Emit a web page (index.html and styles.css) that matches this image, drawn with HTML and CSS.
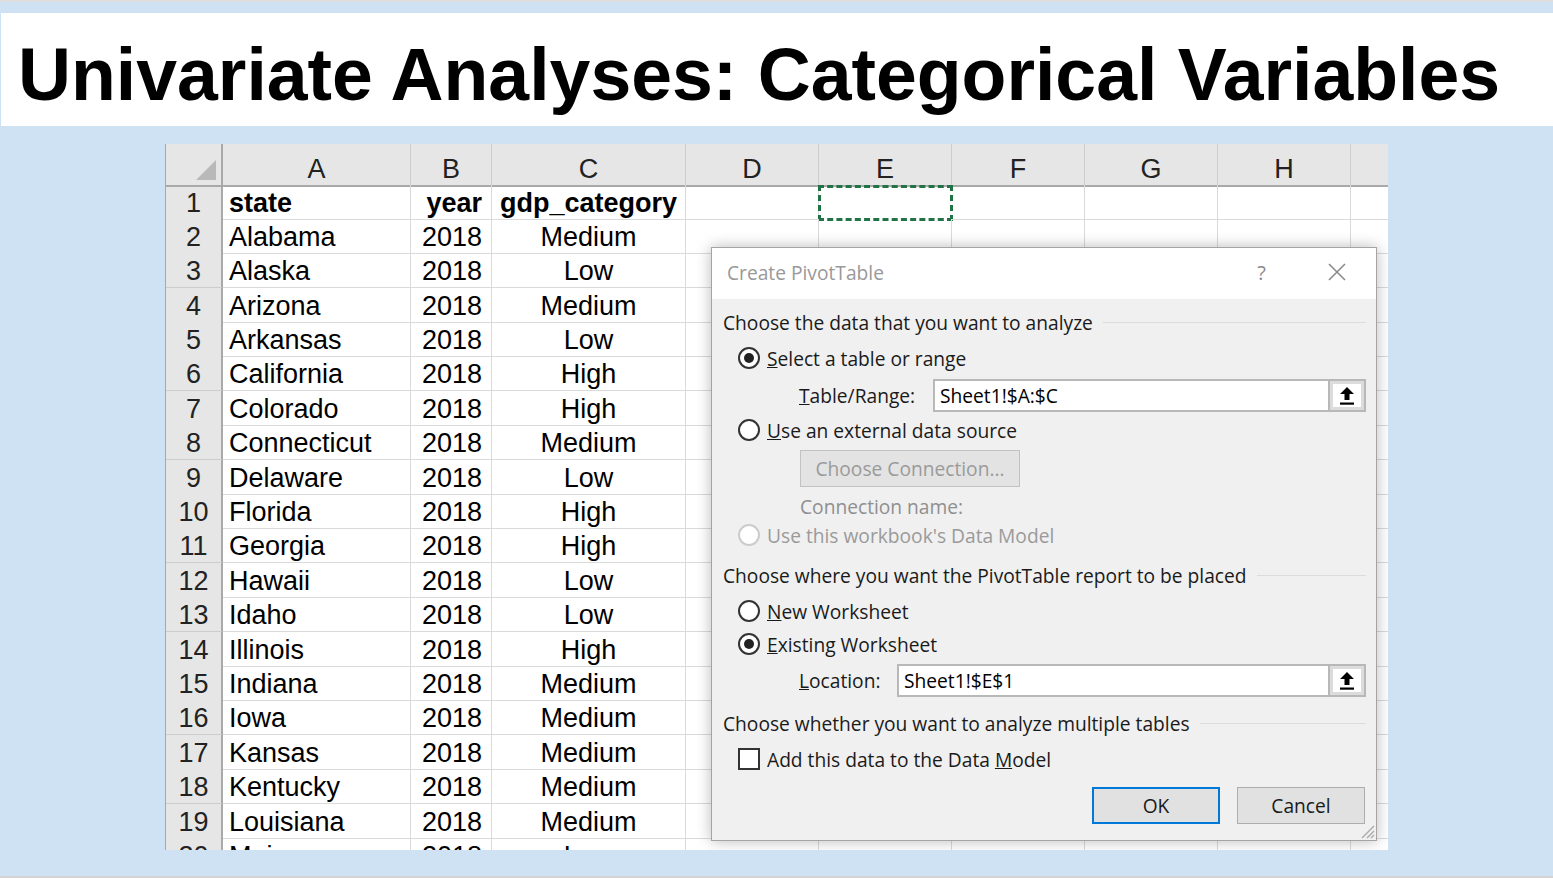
FILE: index.html
```html
<!DOCTYPE html>
<html lang="en">
<head>
<meta charset="utf-8">
<title>Univariate Analyses: Categorical Variables</title>
<link rel="stylesheet" href="styles.css">
</head>
<body>
<div class="page">
  <header class="title-bar">
    <h1>Univariate Analyses: Categorical Variables</h1>
  </header>

  <section class="sheet">
    <div class="row head-row">
      <div class="cell corner"><span class="corner-tri"></span></div>
      <div class="cell col-head">A</div>
      <div class="cell col-head">B</div>
      <div class="cell col-head">C</div>
      <div class="cell col-head">D</div>
      <div class="cell col-head">E</div>
      <div class="cell col-head">F</div>
      <div class="cell col-head">G</div>
      <div class="cell col-head">H</div>
      <div class="cell col-head"></div>
    </div>
    <div class="row">
      <div class="cell row-head">1</div>
      <div class="cell c-left bold">state</div>
      <div class="cell c-right bold">year</div>
      <div class="cell c-center bold">gdp_category</div>
      <div class="cell"></div><div class="cell selected"></div><div class="cell"></div><div class="cell"></div><div class="cell"></div><div class="cell"></div>
    </div>
    <div class="row"><div class="cell row-head">2</div><div class="cell c-left">Alabama</div><div class="cell c-right">2018</div><div class="cell c-center">Medium</div><div class="cell"></div><div class="cell"></div><div class="cell"></div><div class="cell"></div><div class="cell"></div><div class="cell"></div></div>
    <div class="row"><div class="cell row-head">3</div><div class="cell c-left">Alaska</div><div class="cell c-right">2018</div><div class="cell c-center">Low</div><div class="cell"></div><div class="cell"></div><div class="cell"></div><div class="cell"></div><div class="cell"></div><div class="cell"></div></div>
    <div class="row"><div class="cell row-head">4</div><div class="cell c-left">Arizona</div><div class="cell c-right">2018</div><div class="cell c-center">Medium</div><div class="cell"></div><div class="cell"></div><div class="cell"></div><div class="cell"></div><div class="cell"></div><div class="cell"></div></div>
    <div class="row"><div class="cell row-head">5</div><div class="cell c-left">Arkansas</div><div class="cell c-right">2018</div><div class="cell c-center">Low</div><div class="cell"></div><div class="cell"></div><div class="cell"></div><div class="cell"></div><div class="cell"></div><div class="cell"></div></div>
    <div class="row"><div class="cell row-head">6</div><div class="cell c-left">California</div><div class="cell c-right">2018</div><div class="cell c-center">High</div><div class="cell"></div><div class="cell"></div><div class="cell"></div><div class="cell"></div><div class="cell"></div><div class="cell"></div></div>
    <div class="row"><div class="cell row-head">7</div><div class="cell c-left">Colorado</div><div class="cell c-right">2018</div><div class="cell c-center">High</div><div class="cell"></div><div class="cell"></div><div class="cell"></div><div class="cell"></div><div class="cell"></div><div class="cell"></div></div>
    <div class="row"><div class="cell row-head">8</div><div class="cell c-left">Connecticut</div><div class="cell c-right">2018</div><div class="cell c-center">Medium</div><div class="cell"></div><div class="cell"></div><div class="cell"></div><div class="cell"></div><div class="cell"></div><div class="cell"></div></div>
    <div class="row"><div class="cell row-head">9</div><div class="cell c-left">Delaware</div><div class="cell c-right">2018</div><div class="cell c-center">Low</div><div class="cell"></div><div class="cell"></div><div class="cell"></div><div class="cell"></div><div class="cell"></div><div class="cell"></div></div>
    <div class="row"><div class="cell row-head">10</div><div class="cell c-left">Florida</div><div class="cell c-right">2018</div><div class="cell c-center">High</div><div class="cell"></div><div class="cell"></div><div class="cell"></div><div class="cell"></div><div class="cell"></div><div class="cell"></div></div>
    <div class="row"><div class="cell row-head">11</div><div class="cell c-left">Georgia</div><div class="cell c-right">2018</div><div class="cell c-center">High</div><div class="cell"></div><div class="cell"></div><div class="cell"></div><div class="cell"></div><div class="cell"></div><div class="cell"></div></div>
    <div class="row"><div class="cell row-head">12</div><div class="cell c-left">Hawaii</div><div class="cell c-right">2018</div><div class="cell c-center">Low</div><div class="cell"></div><div class="cell"></div><div class="cell"></div><div class="cell"></div><div class="cell"></div><div class="cell"></div></div>
    <div class="row"><div class="cell row-head">13</div><div class="cell c-left">Idaho</div><div class="cell c-right">2018</div><div class="cell c-center">Low</div><div class="cell"></div><div class="cell"></div><div class="cell"></div><div class="cell"></div><div class="cell"></div><div class="cell"></div></div>
    <div class="row"><div class="cell row-head">14</div><div class="cell c-left">Illinois</div><div class="cell c-right">2018</div><div class="cell c-center">High</div><div class="cell"></div><div class="cell"></div><div class="cell"></div><div class="cell"></div><div class="cell"></div><div class="cell"></div></div>
    <div class="row"><div class="cell row-head">15</div><div class="cell c-left">Indiana</div><div class="cell c-right">2018</div><div class="cell c-center">Medium</div><div class="cell"></div><div class="cell"></div><div class="cell"></div><div class="cell"></div><div class="cell"></div><div class="cell"></div></div>
    <div class="row"><div class="cell row-head">16</div><div class="cell c-left">Iowa</div><div class="cell c-right">2018</div><div class="cell c-center">Medium</div><div class="cell"></div><div class="cell"></div><div class="cell"></div><div class="cell"></div><div class="cell"></div><div class="cell"></div></div>
    <div class="row"><div class="cell row-head">17</div><div class="cell c-left">Kansas</div><div class="cell c-right">2018</div><div class="cell c-center">Medium</div><div class="cell"></div><div class="cell"></div><div class="cell"></div><div class="cell"></div><div class="cell"></div><div class="cell"></div></div>
    <div class="row"><div class="cell row-head">18</div><div class="cell c-left">Kentucky</div><div class="cell c-right">2018</div><div class="cell c-center">Medium</div><div class="cell"></div><div class="cell"></div><div class="cell"></div><div class="cell"></div><div class="cell"></div><div class="cell"></div></div>
    <div class="row"><div class="cell row-head">19</div><div class="cell c-left">Louisiana</div><div class="cell c-right">2018</div><div class="cell c-center">Medium</div><div class="cell"></div><div class="cell"></div><div class="cell"></div><div class="cell"></div><div class="cell"></div><div class="cell"></div></div>
    <div class="row"><div class="cell row-head">20</div><div class="cell c-left">Maine</div><div class="cell c-right">2018</div><div class="cell c-center">Low</div><div class="cell"></div><div class="cell"></div><div class="cell"></div><div class="cell"></div><div class="cell"></div><div class="cell"></div></div>

    <div class="dialog">
      <div class="dlg-title">
        <span class="dlg-name">Create PivotTable</span>
        <span class="dlg-help">?</span>
        <svg class="dlg-close" width="18" height="18" viewBox="0 0 18 18"><path d="M1 1 L17 17 M17 1 L1 17" stroke="#8a8a8a" stroke-width="1.6" fill="none"/></svg>
      </div>
      <div class="dlg-body">
        <div class="group-head"><span>Choose the data that you want to analyze</span></div>
        <div class="opt opt-first"><span class="radio checked"></span><span><u>S</u>elect a table or range</span></div>
        <div class="field field-range">
          <span class="field-label lbl-range"><u>T</u>able/Range:</span>
          <div class="input-wrap">
            <span class="input-text">Sheet1!$A:$C</span>
            <span class="pick"><svg width="16" height="20" viewBox="0 0 16 20"><path d="M8 1 L15 8 L10.5 8 L10.5 14 L5.5 14 L5.5 8 L1 8 Z" fill="#000"/><rect x="1" y="16.5" width="14" height="2.2" fill="#000"/></svg></span>
          </div>
        </div>
        <div class="opt opt-ext"><span class="radio"></span><span><u>U</u>se an external data source</span></div>
        <div class="conn-btn">Choose Connection...</div>
        <div class="conn-name">Connection name:</div>
        <div class="opt opt-model disabled"><span class="radio off"></span><span>Use this workbook's Data Model</span></div>

        <div class="group-head gh-2"><span>Choose where you want the PivotTable report to be placed</span></div>
        <div class="opt opt-first"><span class="radio"></span><span><u>N</u>ew Worksheet</span></div>
        <div class="opt opt-exist"><span class="radio checked"></span><span><u>E</u>xisting Worksheet</span></div>
        <div class="field field-loc">
          <span class="field-label lbl-loc"><u>L</u>ocation:</span>
          <div class="input-wrap">
            <span class="input-text">Sheet1!$E$1</span>
            <span class="pick"><svg width="16" height="20" viewBox="0 0 16 20"><path d="M8 1 L15 8 L10.5 8 L10.5 14 L5.5 14 L5.5 8 L1 8 Z" fill="#000"/><rect x="1" y="16.5" width="14" height="2.2" fill="#000"/></svg></span>
          </div>
        </div>

        <div class="group-head gh-3"><span>Choose whether you want to analyze multiple tables</span></div>
        <div class="opt opt-first"><span class="check"></span><span>Add this data to the Data <u>M</u>odel</span></div>

        <div class="dlg-buttons">
          <div class="btn btn-ok">OK</div>
          <div class="btn">Cancel</div>
        </div>
      </div>
      <svg class="grip" width="16" height="16" viewBox="0 0 16 16"><path d="M15 3 L3 15 M15 8 L8 15 M15 12 L12 15" stroke="#a8a8a8" stroke-width="1.3" fill="none"/></svg>
    </div>
  </section>
</div>
</body>
</html>
```

FILE: styles.css
```css
html, body {
  margin: 0;
  padding: 0;
}

body {
  width: 1553px;
  height: 878px;
  box-sizing: border-box;
  overflow: hidden;
  background: #cfe2f3;
  border-top: 2px solid #dedede;
  border-bottom: 2px solid #d4d4d4;
  font-family: "Liberation Sans", Arial, sans-serif;
}

.page {
  padding-top: 11px;
}

.title-bar {
  margin-left: 1px;
  height: 113px;
  box-sizing: border-box;
  background: #ffffff;
  padding: 26px 0 0 17px;
}

.title-bar h1 {
  margin: 0;
  font-family: "Liberation Sans", Arial, sans-serif;
  font-weight: bold;
  font-size: 73.4px;
  line-height: 73px;
  color: #000;
  white-space: nowrap;
}

/* ---------- spreadsheet ---------- */
.sheet {
  position: relative;
  margin: 18px 0 0 165px;
  width: 1223px;
  height: 706px;
  overflow: hidden;
  background: #ffffff;
  box-sizing: border-box;
  border-left: 1px solid #a8a8a8;
}

.row {
  display: grid;
  grid-template-columns: 57px 188px 81px 194px 133px 133px 133px 133px 133px 38px;
  height: 34.4px;
}

.head-row {
  height: 40.5px;
}

.cell {
  box-sizing: border-box;
  border-right: 1px solid #dadada;
  border-bottom: 1px solid #dadada;
  font-family: "Liberation Sans", Arial, sans-serif;
  font-size: 27px;
  color: #000;
  display: flex;
  align-items: center;
  padding-top: 3px;
  white-space: nowrap;
  overflow: visible;
}

.col-head {
  background: #e6e6e6;
  justify-content: center;
  border-right: 1px solid #cdcdcd;
  border-bottom: 2px solid #a9a9a9;
  padding-top: 10px;
  color: #222;
}

.corner {
  position: relative;
  background: #e6e6e6;
  border-right: 2px solid #a9a9a9;
  border-bottom: 2px solid #a9a9a9;
}

.corner-tri {
  position: absolute;
  right: 5px;
  bottom: 5px;
  width: 20px;
  height: 20px;
  background: #b9b9b9;
  clip-path: polygon(100% 0, 100% 100%, 0 100%);
}

.row-head {
  background: #e6e6e6;
  justify-content: center;
  border-right: 2px solid #a9a9a9;
  border-bottom: 1px solid #cdcdcd;
  color: #222;
}

.c-left {
  padding-left: 6px;
}

.c-right {
  justify-content: flex-end;
  padding-right: 9px;
}

.c-center {
  justify-content: center;
}

.bold {
  font-weight: bold;
}

.selected {
  border: 3px dashed #217346;
  margin: 0 -1px -1px -1px;
}

/* ---------- dialog ---------- */
.dialog {
  position: absolute;
  left: 545px;
  top: 103px;
  width: 666px;
  height: 594px;
  box-sizing: border-box;
  border: 1px solid #a4a4a4;
  background: #f0f0f0;
  box-shadow: 0 0 14px rgba(0, 0, 0, 0.28);
  font-family: "Open Sans", "Noto Sans", sans-serif;
  font-size: 19.2px;
  color: #1a1a1a;
}

.dlg-title {
  height: 51px;
  box-sizing: border-box;
  padding-bottom: 3px;
  background: #ffffff;
  display: flex;
  align-items: center;
  padding-left: 15px;
}

.dlg-name {
  color: #999999;
}

.dlg-help {
  margin-left: auto;
  color: #8a8a8a;
  font-size: 20px;
}

.dlg-close {
  margin-left: 62px;
  margin-right: 30px;
}

.dlg-body {
  padding: 9px 10px 0 11px;
}

.group-head {
  height: 28px;
  display: flex;
  align-items: center;
}

.group-head::after {
  content: "";
  flex: 1;
  height: 1px;
  background: #dcdcdc;
  margin-left: 10px;
}

.gh-2,
.gh-3 {
  margin-top: 12px;
}

.opt {
  height: 28px;
  display: flex;
  align-items: center;
  margin-left: 15px;
  gap: 7px;
}

.opt-first {
  margin-top: 8px;
}

.opt-ext {
  margin-top: 4px;
}

.opt-exist {
  margin-top: 5px;
}

.opt-model {
  margin-top: 1px;
}

.disabled {
  color: #9a9a9a;
}

.radio {
  width: 22px;
  height: 22px;
  box-sizing: border-box;
  border-radius: 50%;
  border: 2px solid #333333;
  background: #ffffff;
  display: flex;
  align-items: center;
  justify-content: center;
  flex: none;
}

.radio.checked::after {
  content: "";
  width: 10px;
  height: 10px;
  border-radius: 50%;
  background: #222222;
}

.radio.off {
  border-color: #cccccc;
}

.check {
  width: 22px;
  height: 22px;
  box-sizing: border-box;
  border: 2px solid #333333;
  background: #ffffff;
  flex: none;
}

.field {
  height: 33px;
  display: flex;
  align-items: center;
  margin-left: 76px;
}

.field-label {
  flex: none;
  white-space: nowrap;
}

.lbl-range {
  width: 134px;
}

.lbl-loc {
  width: 98px;
}

.field-range {
  margin-top: 7px;
}

.field-loc {
  margin-top: 6px;
}

.input-wrap {
  flex: 1;
  height: 33px;
  box-sizing: border-box;
  border: 2px solid #b8b8b8;
  background: #ffffff;
  display: flex;
  align-items: center;
}

.input-text {
  flex: 1;
  padding-left: 5px;
  color: #000;
}

.pick {
  width: 36px;
  height: 29px;
  box-sizing: border-box;
  border-left: 2px solid #b8b8b8;
  background: #ffffff;
  box-shadow: inset 0 0 0 3px #dcdcdc;
  display: flex;
  align-items: center;
  justify-content: center;
}

.conn-btn {
  margin: 6px 0 0 77px;
  width: 220px;
  height: 37px;
  box-sizing: border-box;
  border: 1px solid #c2c2c2;
  background: #e3e3e3;
  color: #9a9a9a;
  display: flex;
  align-items: center;
  justify-content: center;
}

.conn-name {
  margin: 5px 0 0 77px;
  height: 28px;
  display: flex;
  align-items: center;
  color: #8f8f8f;
}

.dlg-buttons {
  margin-top: 14px;
  display: flex;
  justify-content: flex-end;
  gap: 17px;
  padding-right: 1px;
}

.btn {
  width: 128px;
  height: 37px;
  box-sizing: border-box;
  border: 1px solid #adadad;
  background: #e1e1e1;
  display: flex;
  align-items: center;
  justify-content: center;
  color: #1a1a1a;
}

.btn-ok {
  border: 2px solid #0078d7;
}

.grip {
  position: absolute;
  right: 1px;
  bottom: 1px;
}
```
